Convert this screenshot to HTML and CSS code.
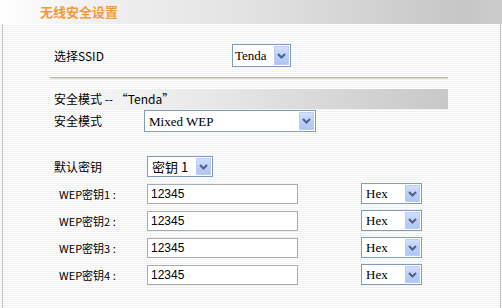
FILE: index.html
```html
<!DOCTYPE html>
<html lang="zh-CN">
<head>
<meta charset="utf-8">
<title>无线安全设置</title>
<link rel="stylesheet" href="styles.css">
</head>
<body>
<div class="header"><span class="title">无线安全设置</span></div>
<div class="panel">
  <div class="content">
    <div class="row row-ssid">
      <span class="label l-ssid">选择SSID</span>
      <div class="sel sel-ssid"><span class="sel-text">Tenda</span><span class="btn"><svg width="9" height="6" viewBox="0 0 9 6"><path d="M1 1 L4.5 4.5 L8 1" fill="none" stroke="#4d6185" stroke-width="2"/></svg></span></div>
    </div>
    <div class="sep"></div>
    <div class="bar"><span class="label">安全模式 -- “Tenda”</span></div>
    <div class="row row-mode">
      <span class="label l-mode">安全模式</span>
      <div class="sel sel-mode"><span class="sel-text">Mixed WEP</span><span class="btn"><svg width="9" height="6" viewBox="0 0 9 6"><path d="M1 1 L4.5 4.5 L8 1" fill="none" stroke="#4d6185" stroke-width="2"/></svg></span></div>
    </div>
    <div class="row row-key">
      <span class="label l-key">默认密钥</span>
      <div class="sel sel-key"><span class="sel-text">密钥 1</span><span class="btn"><svg width="9" height="6" viewBox="0 0 9 6"><path d="M1 1 L4.5 4.5 L8 1" fill="none" stroke="#4d6185" stroke-width="2"/></svg></span></div>
    </div>
    <div class="keys">
      <div class="row row-wep">
        <span class="label l-wep">WEP密钥1 :</span>
        <div class="inp">12345</div>
        <div class="sel sel-hex"><span class="sel-text">Hex</span><span class="btn"><svg width="9" height="6" viewBox="0 0 9 6"><path d="M1 1 L4.5 4.5 L8 1" fill="none" stroke="#4d6185" stroke-width="2"/></svg></span></div>
      </div>
      <div class="row row-wep">
        <span class="label l-wep">WEP密钥2 :</span>
        <div class="inp">12345</div>
        <div class="sel sel-hex"><span class="sel-text">Hex</span><span class="btn"><svg width="9" height="6" viewBox="0 0 9 6"><path d="M1 1 L4.5 4.5 L8 1" fill="none" stroke="#4d6185" stroke-width="2"/></svg></span></div>
      </div>
      <div class="row row-wep">
        <span class="label l-wep">WEP密钥3 :</span>
        <div class="inp">12345</div>
        <div class="sel sel-hex"><span class="sel-text">Hex</span><span class="btn"><svg width="9" height="6" viewBox="0 0 9 6"><path d="M1 1 L4.5 4.5 L8 1" fill="none" stroke="#4d6185" stroke-width="2"/></svg></span></div>
      </div>
      <div class="row row-wep">
        <span class="label l-wep">WEP密钥4 :</span>
        <div class="inp">12345</div>
        <div class="sel sel-hex"><span class="sel-text">Hex</span><span class="btn"><svg width="9" height="6" viewBox="0 0 9 6"><path d="M1 1 L4.5 4.5 L8 1" fill="none" stroke="#4d6185" stroke-width="2"/></svg></span></div>
      </div>
    </div>
  </div>
</div>
</body>
</html>
```
FILE: styles.css
```css
html, body {
  margin: 0;
  padding: 0;
}
body {
  width: 502px;
  height: 308px;
  overflow: hidden;
  font-family: "Noto Sans CJK SC", "Liberation Sans", sans-serif;
  font-size: 12px;
  color: #000;
  background: repeating-linear-gradient(to bottom, #ffffff 0, #ffffff 1px, #f0f0f0 1px, #f0f0f0 2px);
}
.header {
  height: 24px;
  display: flex;
  align-items: center;
  padding-left: 40px;
  background: linear-gradient(to right, #ffffff 0%, #f2f2f2 15%, #e2e2e2 50%, #c6c6c6 92%, #cccccc 100%);
}
.title {
  color: #f39a3c;
  font-weight: bold;
  font-size: 13px;
  line-height: 14px;
  letter-spacing: 0px;
}
.panel {
  margin: 0 1px 0 2px;
  height: 284px;
  box-sizing: border-box;
  border-left: 1px solid #c4c4c4;
  border-right: 1px solid #c4c4c4;
  padding: 20px 0 0 47px;
}
.content {
  width: 398px;
}
.row {
  display: flex;
  align-items: center;
}
.label {
  white-space: nowrap;
  line-height: 14px;
}
.l-ssid { width: 178px; padding-left: 4px; }
.l-mode { width: 90px; padding-left: 4px; }
.l-key { width: 93px; padding-left: 4px; }
.l-wep { width: 88px; padding-left: 9px; font-size: 11px; }
.row-ssid { height: 23px; }
.sep {
  margin-top: 10px;
  height: 0;
  border-top: 1px solid #bdb9a6;
  border-bottom: 1px solid #dedbcf;
}
.bar {
  margin-top: 10px;
  height: 20px;
  display: flex;
  align-items: center;
  padding-left: 4px;
  background: linear-gradient(to right, #fafafa 0%, #e8e8e8 40%, #d2d2d2 80%, #c8c8c8 100%);
}
.row-mode { margin-top: 1px; height: 22px; }
.row-key { margin-top: 24px; height: 21px; }
.keys {
  margin-top: 6px;
  display: flex;
  flex-direction: column;
  gap: 6px;
}
.row-wep { height: 21px; }
.sel {
  box-sizing: border-box;
  border: 1px solid #7f9db9;
  background: #fff;
  display: flex;
  align-items: center;
  justify-content: space-between;
  padding: 1px 1px 1px 4px;
  font-family: "Liberation Serif", "Noto Sans CJK SC", serif;
  font-size: 13px;
}
.sel-text {
  white-space: nowrap;
  line-height: 15px;
}
.btn {
  width: 15px;
  align-self: stretch;
  box-sizing: border-box;
  border: 1px solid #bccdf5;
  background: linear-gradient(to bottom, #d3e0fd 0%, #bccff8 50%, #b0c5f3 100%);
  display: flex;
  align-items: center;
  justify-content: center;
}
.sel-ssid { width: 59px; height: 23px; padding-left: 2px; }
.sel-mode { width: 172px; height: 22px; }
.sel-key { width: 66px; height: 21px; }
.sel-key .sel-text { font-family: "Noto Sans CJK SC", sans-serif; font-size: 13px; }
.sel-hex { width: 61px; height: 21px; margin-left: 63px; }
.inp {
  box-sizing: border-box;
  width: 151px;
  height: 20px;
  border: 1px solid #a5acb2;
  background: #fff;
  padding-left: 3px;
  display: flex;
  align-items: center;
  font-family: "Liberation Sans", sans-serif;
  font-size: 12px;
}
```
